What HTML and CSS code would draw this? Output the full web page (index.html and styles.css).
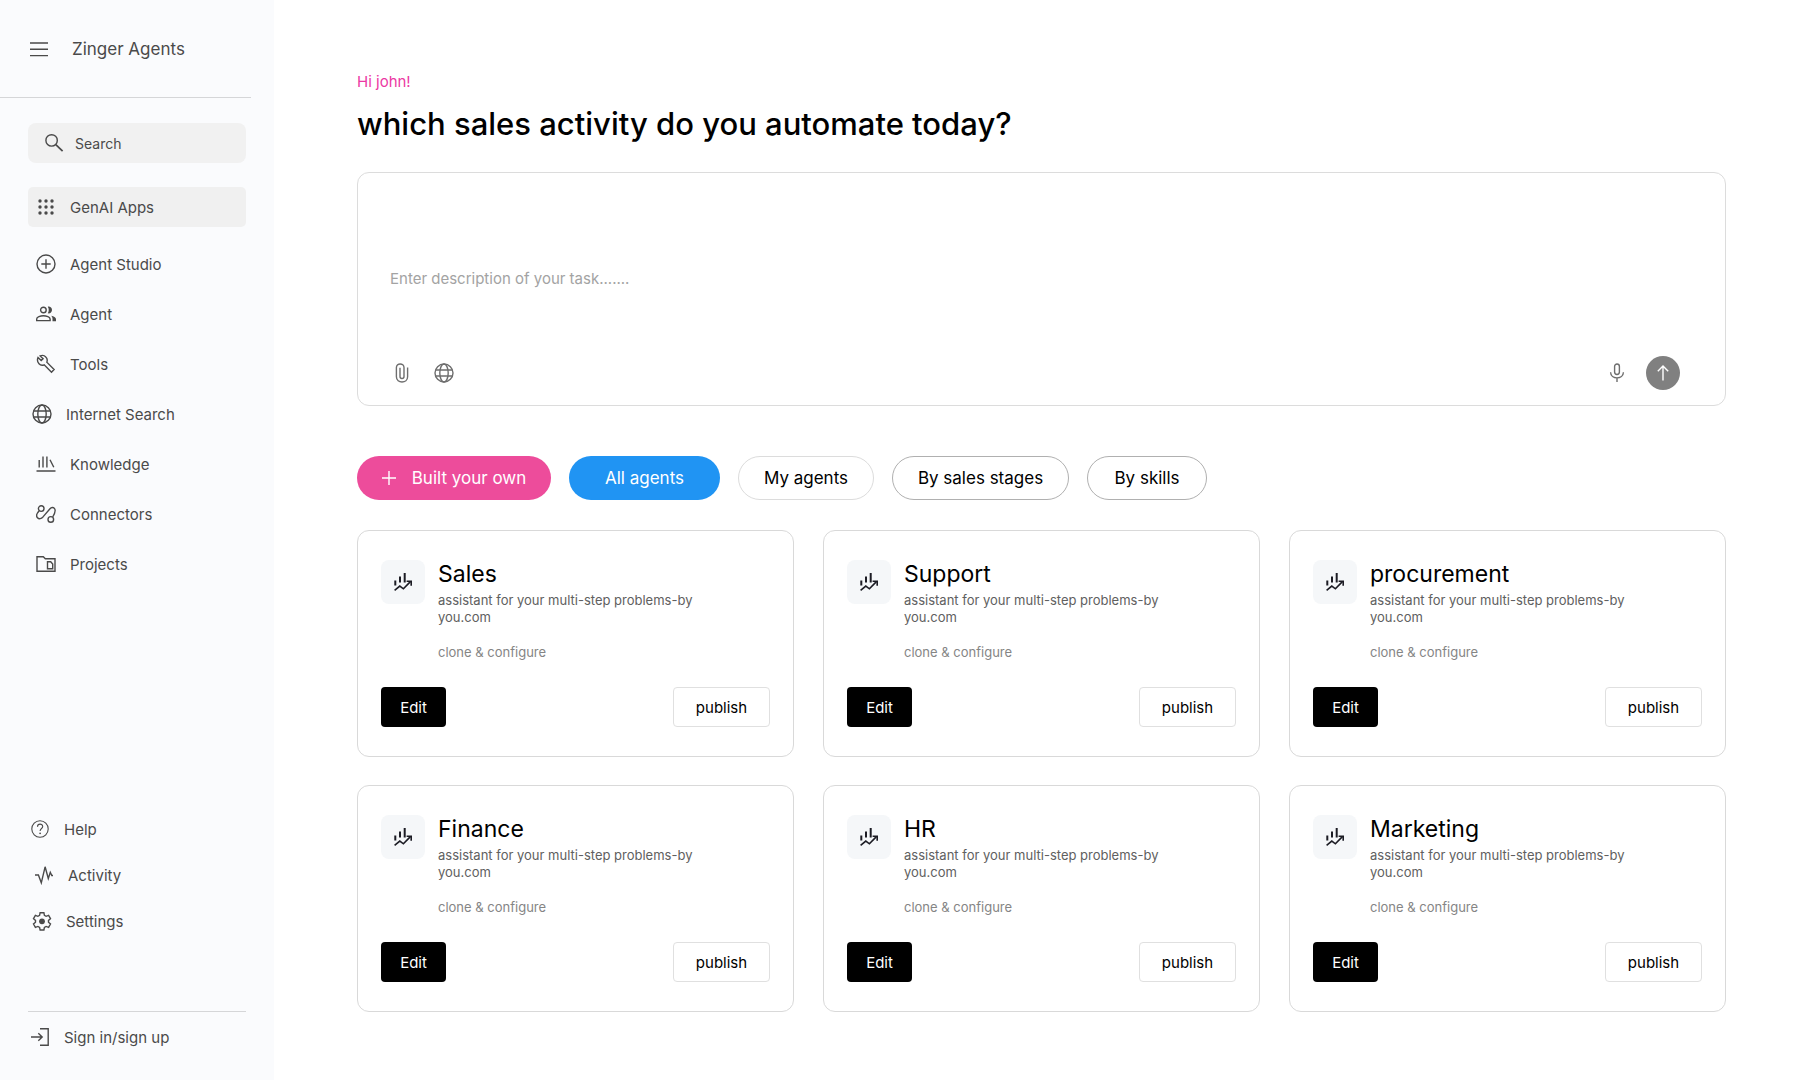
FILE: index.html
```
<!DOCTYPE html>
<html lang="en">

<head>
    <meta charset="UTF-8">
    <meta name="viewport" content="width=device-width, initial-scale=1.0">
    <title>Zinger Agents</title>
    <link rel="stylesheet" href="styles.css">
</head>

<body>
    <!-- shared icons -->
    <svg class="sprite" aria-hidden="true">
        <symbol id="globe" viewBox="0 0 20 20">
            <circle cx="10" cy="10" r="9" />
            <ellipse cx="10" cy="10" rx="4.2" ry="9" />
            <path d="M1.6 7h16.8M1.6 13h16.8" />
        </symbol>
        <symbol id="chart" viewBox="0 0 20 20">
            <path d="M2.3 8.6v5M7 4.6v5.8M11.7 1v9.6" stroke-width="2" />
            <path d="M1.6 18.4l5.2-4.3 3.6 2.7 7-7.2" stroke-width="1.6" />
            <path d="M13.6 9.2h4.6v4.6" stroke-width="1.6" />
        </symbol>
    </svg>

    <div class="container">
        <aside class="sidebar">
            <div class="brand">
                <button class="menuBtn" aria-label="Menu">
                    <svg class="icon" viewBox="0 0 20 20"><path d="M1 4h18M1 10.3h18M1 16.6h18" /></svg>
                </button>
                <span class="brandName">Zinger Agents</span>
            </div>

            <label class="searchBox">
                <svg class="icon" viewBox="0 0 20 20"><circle cx="7.6" cy="7.4" r="5.7" /><path d="M11.8 11.6l6.8 6.6" stroke-width="1.7" /></svg>
                <input type="text" placeholder="Search" aria-label="Search">
            </label>

            <nav class="nav">
                <a href="#" class="navItem active">
                    <svg class="icon solid" viewBox="0 0 20 20">
                        <circle cx="4" cy="4" r="1.7" /><circle cx="10" cy="4" r="1.7" /><circle cx="16" cy="4" r="1.7" />
                        <circle cx="4" cy="10" r="1.7" /><circle cx="10" cy="10" r="1.7" /><circle cx="16" cy="10" r="1.7" />
                        <circle cx="4" cy="16" r="1.7" /><circle cx="10" cy="16" r="1.7" /><circle cx="16" cy="16" r="1.7" />
                    </svg>
                    GenAI Apps
                </a>
                <a href="#" class="navItem">
                    <svg class="icon" viewBox="0 0 20 20"><circle cx="10" cy="10" r="9" /><path d="M10 5.3v9.4M5.3 10h9.4" /></svg>
                    Agent Studio
                </a>
                <a href="#" class="navItem">
                    <svg class="icon" viewBox="0 0 20 20">
                        <circle cx="7.4" cy="6" r="2.8" />
                        <path d="M.7 16.6v-1.7c0-1.9 3.7-3.1 6.7-3.1s6.7 1.2 6.7 3.1v1.7z" />
                        <path class="fill" d="M11.8 2.7c2.2-.5 4.2 1.1 4.2 3.3s-2 3.8-4.2 3.3c1.3-2 1.3-4.6 0-6.600zM15.200 11.800c2.500.5 4.800 1.600 4.800 3.300v2.200h-3.500v-2.200c0-1.400-.4-2.500-1.300-3.300z" />
                    </svg>
                    Agent
                </a>
                <a href="#" class="navItem">
                    <svg class="icon" viewBox="0 0 20 20">
                        <path d="M2 3.500l3.200 3.100 1.900-1.900L4.200 1.900c2-.9 4.200-.5 5.600 1 1.400 1.400 1.700 3.500 1 5.300l7.300 7.300-2.600 2.700-7.300-7.400c-1.800.8-3.900.4-5.200-1C1.500 8.200 1.200 5.500 2 3.500z" />
                    </svg>
                    Tools
                </a>
                <a href="#" class="navItem outdent">
                    <svg class="icon"><use href="#globe" /></svg>
                    Internet Search
                </a>
                <a href="#" class="navItem">
                    <svg class="icon" viewBox="0 0 20 20"><path d="M3.200 6v7.500M7 2.500v11M10.900 2.500v11M14 5.800l3.800 7.500M.5 17h19" /></svg>
                    Knowledge
                </a>
                <a href="#" class="navItem">
                    <svg class="icon" viewBox="0 0 20 20">
                        <circle cx="5.200" cy="4.600" r="2.800" />
                        <circle cx="14.800" cy="15.400" r="2.800" />
                        <path d="M3.200 6.700C.6 9.400 0 12 1.500 13.700c1.600 1.800 3.800 1 5.500-.8l7-8.200c1.300-1.500 3.300-1.600 4.400-.3 1.500 1.800.7 4.700-1.700 8.600" />
                    </svg>
                    Connectors
                </a>
                <a href="#" class="navItem">
                    <svg class="icon" viewBox="0 0 20 20">
                        <path d="M1 2.700h6.300l2 2H19v12.600H1z" />
                        <path d="M11.500 7.700h3.200l2 2.300v4.800h-5.200z" />
                    </svg>
                    Projects
                </a>
            </nav>

            <nav class="nav bottomNav">
                <a href="#" class="navItem help">
                    <svg class="icon thin" viewBox="0 0 20 20">
                        <circle cx="10" cy="10" r="8.200" />
                        <path d="M7.500 7.800c0-3.600 5.200-3.400 5.200-.3 0 2-2.600 2-2.600 4.600" />
                        <circle class="fill" cx="10.100" cy="14.300" r=".9" />
                    </svg>
                    Help
                </a>
                <a href="#" class="navItem activity">
                    <svg class="icon" viewBox="0 0 20 20"><path d="M1 10h3.400l2.900 7.800 3.800-16 3.200 11.700 2-6.200 1.500 3.200H19" /></svg>
                    Activity
                </a>
                <a href="#" class="navItem settings">
                    <svg class="icon" viewBox="0 0 20 20">
                        <path d="M8.100 1.700h3.800l.5 2.600 1.700 1 2.500-.9 1.900 3.300-2 1.700v1.900l2 1.700-1.900 3.300-2.500-.9-1.700 1-.5 2.600H8.100l-.5-2.600-1.700-1-2.500.9-1.900-3.300 2-1.700V9.400l-2-1.700 1.900-3.300 2.500.9 1.700-1z" />
                        <circle class="fill" cx="10" cy="10.300" r="2.900" />
                    </svg>
                    Settings
                </a>
            </nav>

            <div class="signIn">
                <a href="#" class="navItem help">
                    <svg class="icon" viewBox="0 0 20 20"><path d="M10 1.800h8.200v16.400H10M1 10h11M8.300 6.200l3.900 3.800-3.900 3.800" /></svg>
                    Sign in/sign up
                </a>
            </div>
        </aside>

        <main class="content">
            <p class="hello">Hi john!</p>
            <h1 class="title">which sales activity do you automate today?</h1>

            <div class="promptBox">
                <textarea placeholder="Enter description of your task......." aria-label="Task description"></textarea>
                <div class="promptTools">
                    <button class="toolBtn" aria-label="Attach file">
                        <svg class="icon" viewBox="0 0 20 20"><path d="M15.600 4.500v9.300c0 7-11.200 7-11.200 0V4.600c0-4.900 7.600-4.900 7.600 0v9c0 2.500-4 2.500-4 0V4.800" /></svg>
                    </button>
                    <button class="toolBtn" aria-label="Search the web">
                        <svg class="icon"><use href="#globe" /></svg>
                    </button>
                    <button class="toolBtn mic" aria-label="Voice input">
                        <svg class="icon" viewBox="0 0 20 20"><rect x="7.600" y="1" width="4.800" height="10.500" rx="2.400" /><path d="M3.600 9.300c0 7.400 12.800 7.400 12.800 0M10 14.900V19" /></svg>
                    </button>
                    <button class="sendBtn" aria-label="Send">
                        <svg class="icon" viewBox="0 0 20 20"><path d="M10 17.500V3.200M4.800 8.300L10 3.100l5.200 5.200" /></svg>
                    </button>
                </div>
            </div>

            <div class="filters">
                <button class="pill pink">
                    <svg class="plus" viewBox="0 0 14 14"><path d="M7 0v14M0 7h14" /></svg>
                    Built your own
                </button>
                <button class="pill blue">All agents</button>
                <button class="pill light">My agents</button>
                <button class="pill">By sales stages</button>
                <button class="pill short">By skills</button>
            </div>

            <div class="cards">
                <article class="card">
                    <div class="cardTop">
                        <div class="cardIcon"><svg class="icon"><use href="#chart" /></svg></div>
                        <div class="cardText">
                            <h2>Sales</h2>
                            <p class="desc">assistant for your multi-step problems-by you.com</p>
                            <p class="clone">clone &amp; configure</p>
                        </div>
                    </div>
                    <div class="cardBtns">
                        <button class="btn edit">Edit</button>
                        <button class="btn publish">publish</button>
                    </div>
                </article>
                <article class="card">
                    <div class="cardTop">
                        <div class="cardIcon"><svg class="icon"><use href="#chart" /></svg></div>
                        <div class="cardText">
                            <h2>Support</h2>
                            <p class="desc">assistant for your multi-step problems-by you.com</p>
                            <p class="clone">clone &amp; configure</p>
                        </div>
                    </div>
                    <div class="cardBtns">
                        <button class="btn edit">Edit</button>
                        <button class="btn publish">publish</button>
                    </div>
                </article>
                <article class="card">
                    <div class="cardTop">
                        <div class="cardIcon"><svg class="icon"><use href="#chart" /></svg></div>
                        <div class="cardText">
                            <h2>procurement</h2>
                            <p class="desc">assistant for your multi-step problems-by you.com</p>
                            <p class="clone">clone &amp; configure</p>
                        </div>
                    </div>
                    <div class="cardBtns">
                        <button class="btn edit">Edit</button>
                        <button class="btn publish">publish</button>
                    </div>
                </article>
                <article class="card">
                    <div class="cardTop">
                        <div class="cardIcon"><svg class="icon"><use href="#chart" /></svg></div>
                        <div class="cardText">
                            <h2>Finance</h2>
                            <p class="desc">assistant for your multi-step problems-by you.com</p>
                            <p class="clone">clone &amp; configure</p>
                        </div>
                    </div>
                    <div class="cardBtns">
                        <button class="btn edit">Edit</button>
                        <button class="btn publish">publish</button>
                    </div>
                </article>
                <article class="card">
                    <div class="cardTop">
                        <div class="cardIcon"><svg class="icon"><use href="#chart" /></svg></div>
                        <div class="cardText">
                            <h2>HR</h2>
                            <p class="desc">assistant for your multi-step problems-by you.com</p>
                            <p class="clone">clone &amp; configure</p>
                        </div>
                    </div>
                    <div class="cardBtns">
                        <button class="btn edit">Edit</button>
                        <button class="btn publish">publish</button>
                    </div>
                </article>
                <article class="card">
                    <div class="cardTop">
                        <div class="cardIcon"><svg class="icon"><use href="#chart" /></svg></div>
                        <div class="cardText">
                            <h2>Marketing</h2>
                            <p class="desc">assistant for your multi-step problems-by you.com</p>
                            <p class="clone">clone &amp; configure</p>
                        </div>
                    </div>
                    <div class="cardBtns">
                        <button class="btn edit">Edit</button>
                        <button class="btn publish">publish</button>
                    </div>
                </article>
            </div>
        </main>
    </div>
</body>

</html>
```
FILE: styles.css
```
* {
    box-sizing: border-box;
}

body {
    margin: 0;
    background-color: #fff;
    color: #000;
    font-family: Inter, "Liberation Sans", sans-serif;
    font-size: 16px;
}

button,
input,
textarea {
    font-family: inherit;
    color: inherit;
}

button {
    padding: 0;
    border: none;
    background: none;
    cursor: pointer;
}

h1,
h2,
p {
    margin: 0;
}

.sprite {
    display: none;
}

.icon {
    width: 20px;
    height: 20px;
    flex-shrink: 0;
    fill: none;
    stroke: currentColor;
    stroke-width: 1.4;
}

.icon.thin {
    stroke-width: 1.1;
}

.icon.solid,
.icon .fill {
    fill: currentColor;
    stroke: none;
}

.container {
    display: flex;
    min-height: 100vh;
}

/* sidebar */
.sidebar {
    display: flex;
    flex-direction: column;
    width: 274px;
    flex-shrink: 0;
    padding: 0 28px 20px;
    background-color: #fafbfd;
    color: #4a4a4a;
}

.brand {
    display: flex;
    align-items: center;
    gap: 23px;
    margin: 0 -5px 0 -28px;
    padding: 37px 0 36px 29px;
    border-bottom: 1px solid #d5d6d8;
}

.menuBtn {
    display: flex;
}

.brandName {
    font-size: 17px;
    line-height: 24px;
}

.searchBox {
    display: flex;
    align-items: center;
    gap: 11px;
    height: 40px;
    margin-top: 25px;
    padding-left: 16px;
    border-radius: 8px;
    background-color: #f1f1f1;
}

.searchBox input {
    width: 100%;
    padding: 0;
    border: none;
    outline: none;
    background: none;
    font-size: 14px;
}

.searchBox input::placeholder {
    color: #4a4a4a;
    opacity: 1;
}

.nav {
    display: flex;
    flex-direction: column;
    margin-top: 24px;
}

.navItem {
    display: flex;
    align-items: center;
    gap: 14px;
    height: 50px;
    padding-left: 8px;
    color: #4a4a4a;
    font-size: 15px;
    text-decoration: none;
}

.navItem.active {
    height: 40px;
    margin-bottom: 12px;
    border-radius: 5px;
    background-color: #f0f0f0;
}

.navItem.outdent,
.navItem.settings {
    padding-left: 4px;
}

.navItem.help {
    padding-left: 2px;
}

.navItem.activity {
    padding-left: 6px;
}

.bottomNav {
    margin-top: auto;
    margin-bottom: 67px;
}

.bottomNav .navItem,
.signIn .navItem {
    height: 46px;
}

.signIn {
    padding-top: 2px;
    border-top: 1px solid #d5d6d8;
}

/* main */
.content {
    flex: 1;
    min-width: 0;
    padding: 72px 82px 40px 83px;
}

.hello {
    color: #ec38a3;
    font-size: 15px;
    line-height: 20px;
}

.title {
    margin-top: 12px;
    font-size: 31px;
    font-weight: 500;
    line-height: 40px;
}

.promptBox {
    margin-top: 28px;
    border: 1px solid #dcdcdc;
    border-radius: 12px;
}

.promptBox textarea {
    display: block;
    width: 100%;
    height: 183px;
    padding: 94px 32px 0;
    border: none;
    outline: none;
    resize: none;
    background: none;
    font-size: 15px;
    line-height: 24px;
}

.promptBox textarea::placeholder {
    color: #a3a3a3;
    opacity: 1;
}

.promptTools {
    display: flex;
    align-items: center;
    gap: 22px;
    padding: 0 45px 15px 34px;
    color: #6e6e6e;
}

.toolBtn {
    display: flex;
}

.mic {
    margin-left: auto;
    margin-right: -3px;
}

.sendBtn {
    display: flex;
    align-items: center;
    justify-content: center;
    width: 34px;
    height: 34px;
    border-radius: 50%;
    background-color: #808080;
    color: #fff;
}

.filters {
    display: flex;
    flex-wrap: wrap;
    gap: 18px;
    margin-top: 50px;
}

.pill {
    display: flex;
    align-items: center;
    justify-content: center;
    min-width: 177px;
    height: 44px;
    padding: 0 22px;
    border: 1px solid #b0b0b0;
    border-radius: 22px;
    font-size: 17px;
}

.pill.pink {
    gap: 16px;
    min-width: 194px;
    border: none;
    background-color: #ed4c9b;
    color: #fff;
}

.pill.blue {
    min-width: 151px;
    border: none;
    background-color: #2094f3;
    color: #fff;
}

.pill.light {
    min-width: 136px;
    border-color: #dcdcdc;
}

.pill.short {
    min-width: 120px;
}

.plus {
    width: 14px;
    height: 14px;
    stroke: currentColor;
    stroke-width: 1.4;
}

.cards {
    display: grid;
    grid-template-columns: repeat(3, 1fr);
    gap: 28px 29px;
    margin-top: 30px;
}

.card {
    padding: 29px 23px;
    border: 1px solid #d9d9d9;
    border-radius: 12px;
}

.cardTop {
    display: flex;
    gap: 13px;
}

.cardIcon {
    display: flex;
    align-items: center;
    justify-content: center;
    width: 44px;
    height: 44px;
    flex-shrink: 0;
    border-radius: 8px;
    background-color: #f5f7f9;
    color: #1c1c24;
}

.cardText {
    max-width: 290px;
    font-size: 13px;
    line-height: 17px;
}

.cardText h2 {
    margin-bottom: 4px;
    font-size: 23px;
    font-weight: 400;
    line-height: 28px;
}

.desc {
    color: #606060;
}

.clone {
    margin-top: 18px;
    color: #858585;
}

.cardBtns {
    display: flex;
    justify-content: space-between;
    margin-top: 26px;
}

.btn {
    height: 40px;
    border-radius: 4px;
    font-size: 15px;
}

.edit {
    width: 65px;
    background-color: #000;
    color: #fff;
}

.publish {
    width: 97px;
    border: 1px solid #e0e0e0;
}
```
